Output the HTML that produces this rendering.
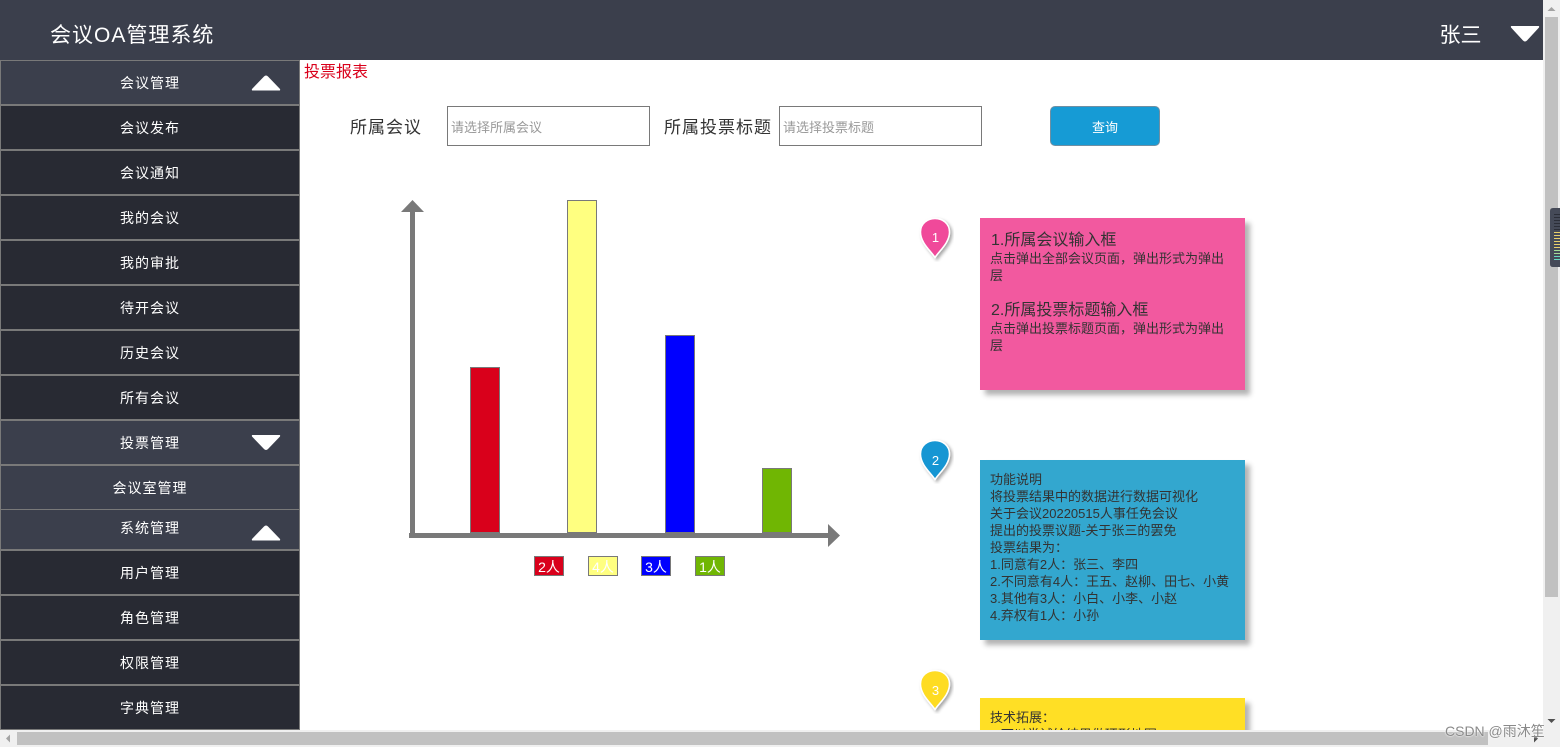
<!DOCTYPE html>
<html lang="zh">
<head>
<meta charset="utf-8">
<title>会议OA管理系统</title>
<style>
*{box-sizing:border-box;margin:0;padding:0}
html,body{width:1560px;height:747px;overflow:hidden;background:#fff}
body{position:relative;font-family:"Liberation Sans","Noto Sans CJK SC",sans-serif;color:#333}
.a{position:absolute}
.hd{left:0;top:0;width:1560px;height:60px;background:#3b3f4c}
.row{position:absolute;left:0;width:300px;border:1px solid #797979;color:#fff;font-size:14px;letter-spacing:1px;display:flex;align-items:center;justify-content:center}
.row span{display:block;line-height:18px;position:relative;top:0;left:0}
.l{background:#3b3f4c}
.d{background:#282a33}
.lab{font-size:17px;letter-spacing:1px;line-height:24px;color:#333;top:116px;white-space:nowrap}
.inp{top:106px;width:203px;height:40px;border:1px solid #797979;background:#fff;font-size:13px;color:#999;line-height:41px;padding-left:3px;white-space:nowrap}
.bar{border:1px solid #797979;width:30px}
.lg{border:1px solid #797979;width:30px;height:20px;top:556px;color:#fff;font-size:14px;line-height:20px;text-align:center;white-space:nowrap}
.card{left:980px;width:265px;box-shadow:5px 5px 5px rgba(0,0,0,.3);color:#333;font-size:13px;line-height:17px;padding-left:10px}
.card .b{font-size:16px;line-height:20px;padding-left:1px;position:relative;top:1px}
.sb{background:#c1c1c1}
svg{display:block}
</style>
</head>
<body>
<div class="a hd"></div>
<div class="a" style="left:50px;top:21px;font-size:21px;letter-spacing:1px;line-height:30px;color:#fff;white-space:nowrap">会议OA管理系统</div>
<div class="a" style="left:1439.500px;top:21px;font-size:21px;line-height:30px;color:#fff;white-space:nowrap">张三</div>
<svg class="a" style="left:1509.500px;top:26px" width="30" height="17" viewBox="0 0 30 17"><path d="M1.5 0H28.500Q29.500 0 29 1.500L17 14.500Q15 16.500 13 14.500L1 1.500Q.5 0 1.500 0Z" fill="#fff"/></svg>

<div class="row l" style="top:60px;height:45px"><span>会议管理</span></div>
<div class="row d" style="top:105px;height:45px"><span>会议发布</span></div>
<div class="row d" style="top:150px;height:45px"><span>会议通知</span></div>
<div class="row d" style="top:195px;height:45px"><span>我的会议</span></div>
<div class="row d" style="top:240px;height:45px"><span>我的审批</span></div>
<div class="row d" style="top:285px;height:45px"><span>待开会议</span></div>
<div class="row d" style="top:330px;height:45px"><span>历史会议</span></div>
<div class="row d" style="top:375px;height:45px"><span>所有会议</span></div>
<div class="row l" style="top:420px;height:45px"><span>投票管理</span></div>
<div class="row l" style="top:465px;height:45px;border-bottom:0"><span>会议室管理</span></div>
<div class="row l" style="top:509px;height:41px"><span style="margin-bottom:4px">系统管理</span></div>
<div class="row d" style="top:550px;height:45px"><span>用户管理</span></div>
<div class="row d" style="top:595px;height:45px"><span>角色管理</span></div>
<div class="row d" style="top:640px;height:45px"><span>权限管理</span></div>
<div class="row d" style="top:685px;height:45px"><span>字典管理</span></div>

<svg class="a" style="left:250.500px;top:75px" width="30" height="16" viewBox="0 0 30 16"><path d="M1.500 15.500H28.500Q29.500 15.500 29 14L17 1.500Q15 -.5 13 1.500L1 14Q.5 15.500 1.500 15.500Z" fill="#fff"/></svg>
<svg class="a" style="left:250.500px;top:435px" width="30" height="16" viewBox="0 0 30 16"><path d="M1.500 0H28.500Q29.500 0 29 1.500L17 14Q15 16 13 14L1 1.500Q.5 0 1.500 0Z" fill="#fff"/></svg>
<svg class="a" style="left:250.500px;top:525px" width="30" height="16" viewBox="0 0 30 16"><path d="M1.500 15.500H28.500Q29.500 15.500 29 14L17 1.500Q15 -.5 13 1.500L1 14Q.5 15.500 1.500 15.500Z" fill="#fff"/></svg>

<div class="a" style="left:304px;top:61px;font-size:16px;line-height:23px;color:#d9001b;white-space:nowrap">投票报表</div>
<div class="a lab" style="left:350px">所属会议</div>
<div class="a inp" style="left:447px">请选择所属会议</div>
<div class="a lab" style="left:664px">所属投票标题</div>
<div class="a inp" style="left:779px">请选择投票标题</div>
<div class="a" style="left:1050px;top:106px;width:110px;height:40px;background:#169bd5;border:1px solid #6f8fa3;border-radius:5px;color:#fff;font-size:13px;line-height:41px;text-align:center">查询</div>

<svg class="a" style="left:400px;top:198px" width="442" height="352" viewBox="0 0 442 352">
<rect x="10" y="12" width="5" height="328" fill="#797979"/>
<path d="M1 14L12.500 2L24 14Z" fill="#797979"/>
<rect x="9" y="335" width="420" height="5" fill="#797979"/>
<path d="M428 326L440 337.500L428 349Z" fill="#797979"/>
</svg>
<div class="a bar" style="left:470px;top:367px;height:166px;background:#d9001b"></div>
<div class="a bar" style="left:567px;top:200px;height:333px;background:#ffff80"></div>
<div class="a bar" style="left:665px;top:335px;height:198px;background:#0000ff"></div>
<div class="a bar" style="left:762px;top:468px;height:65px;background:#70b603"></div>
<div class="a lg" style="left:534px;background:#d9001b">2人</div>
<div class="a lg" style="left:588px;background:#ffff80">4人</div>
<div class="a lg" style="left:641px;background:#0000ff">3人</div>
<div class="a lg" style="left:695px;background:#70b603">1人</div>

<svg width="0" height="0" class="a"><defs><filter id="s" x="-30%" y="-30%" width="170%" height="170%"><feDropShadow dx="2" dy="2" stdDeviation="1.500" flood-color="#000" flood-opacity=".35"/></filter></defs></svg>
<svg class="a" style="left:918px;top:216px" width="36" height="46" viewBox="0 0 36 46"><path d="M17 41.500C13 35 2.500 27 2.500 16C2.500 7.500 9.500 2.500 17 2.500C24.500 2.500 31.500 7.500 31.500 16C31.500 27 21 35 17 41.500Z" fill="#f0489a" stroke="#fff" stroke-width="1.500" filter="url(#s)"/><text x="17.500" y="26" text-anchor="middle" font-size="13" fill="#fff" font-family="Liberation Sans,sans-serif">1</text></svg>
<svg class="a" style="left:918px;top:438px" width="36" height="46" viewBox="0 0 36 46"><path d="M17 41.500C13 35 2.500 27 2.500 16C2.500 7.500 9.500 2.500 17 2.500C24.500 2.500 31.500 7.500 31.500 16C31.500 27 21 35 17 41.500Z" fill="#1296d3" stroke="#fff" stroke-width="1.500" filter="url(#s)"/><text x="17.500" y="27" text-anchor="middle" font-size="13" fill="#fff" font-family="Liberation Sans,sans-serif">2</text></svg>
<svg class="a" style="left:918px;top:668px" width="36" height="46" viewBox="0 0 36 46"><path d="M17 41.500C13 35 2.500 27 2.500 16C2.500 7.500 9.500 2.500 17 2.500C24.500 2.500 31.500 7.500 31.500 16C31.500 27 21 35 17 41.500Z" fill="#fedc24" stroke="#fff" stroke-width="1.500" filter="url(#s)"/><text x="17.500" y="27" text-anchor="middle" font-size="13" fill="#fff" font-family="Liberation Sans,sans-serif">3</text></svg>

<div class="a card" style="top:218px;height:172px;background:#f2599f;padding-top:12px;padding-right:20px">
<div class="b">1.所属会议输入框</div>
<div>点击弹出全部会议页面，弹出形式为弹出层</div>
<div style="height:16px"></div>
<div class="b">2.所属投票标题输入框</div>
<div>点击弹出投票标题页面，弹出形式为弹出层</div>
</div>
<div class="a card" style="top:460px;height:180px;background:#33a7cf;padding-top:11px;white-space:nowrap">
功能说明<br>将投票结果中的数据进行数据可视化<br>关于会议20220515人事任免会议<br>提出的投票议题-关于张三的罢免<br>投票结果为：<br>1.同意有2人：张三、李四<br>2.不同意有4人：王五、赵柳、田七、小黄<br>3.其他有3人：小白、小李、小赵<br>4.弃权有1人：小孙
</div>
<div class="a card" style="top:698px;height:60px;background:#ffdf25;padding-top:11px;color:#333;white-space:nowrap">
技术拓展：<br>1.可以尝试给结果做环形地图
</div>

<!-- vertical scrollbar -->
<div class="a" style="left:1543px;top:0;width:17px;height:747px;background:#f0f0f0"></div>
<div class="a sb" style="left:1545px;top:17px;width:13px;height:580px"></div>
<svg class="a" style="left:1543px;top:0" width="17" height="17"><path d="M4.500 11L8.500 7L12.500 11Z" fill="#a3a3a3"/></svg>
<svg class="a" style="left:1543px;top:713px" width="17" height="17"><path d="M4.500 6L8.500 10L12.500 6Z" fill="#505050"/></svg>
<!-- horizontal scrollbar -->
<div class="a" style="left:0;top:730px;width:1560px;height:17px;background:#f0f0f0"></div>
<div class="a sb" style="left:17px;top:732px;width:1471px;height:13px"></div>
<svg class="a" style="left:0;top:730px" width="17" height="17"><path d="M10 4.500L6 8.500L10 12.500Z" fill="#a3a3a3"/></svg>
<svg class="a" style="left:1528px;top:730px" width="17" height="17"><path d="M6 4.500L10 8.500L6 12.500Z" fill="#505050"/></svg>

<!-- side widget -->
<svg class="a" style="left:1550px;top:208px" width="10" height="59" viewBox="0 0 10 59">
<path d="M10 0H3Q0 0 0 3V56Q0 59 3 59H10Z" fill="#454a58"/>
<g fill="#2b2e38"><rect x="4" y="6" width="6" height="1"/><rect x="4" y="9" width="6" height="1"/><rect x="4" y="12" width="6" height="1"/><rect x="4" y="15" width="6" height="1"/><rect x="4" y="18" width="6" height="1"/><rect x="4" y="21" width="6" height="1"/></g>
<g fill="#e8cf6a"><rect x="4" y="24" width="6" height="1"/><rect x="4" y="27" width="6" height="1"/><rect x="4" y="30" width="6" height="1"/><rect x="4" y="33" width="6" height="1"/><rect x="4" y="36" width="6" height="1"/><rect x="4" y="39" width="6" height="1"/></g>
<g fill="#a3dc96"><rect x="4" y="42" width="6" height="1"/><rect x="4" y="45" width="6" height="1"/></g>
<g fill="#66d8c0"><rect x="4" y="48" width="6" height="1"/><rect x="4" y="51" width="6" height="1"/></g>
</svg>

<div class="a" style="left:1445px;top:722px;font-size:14px;line-height:18px;color:#8a8a8a;text-shadow:0 0 2px #fff,0 0 1px #fff;white-space:nowrap">CSDN @雨沐笙</div>
</body>
</html>
